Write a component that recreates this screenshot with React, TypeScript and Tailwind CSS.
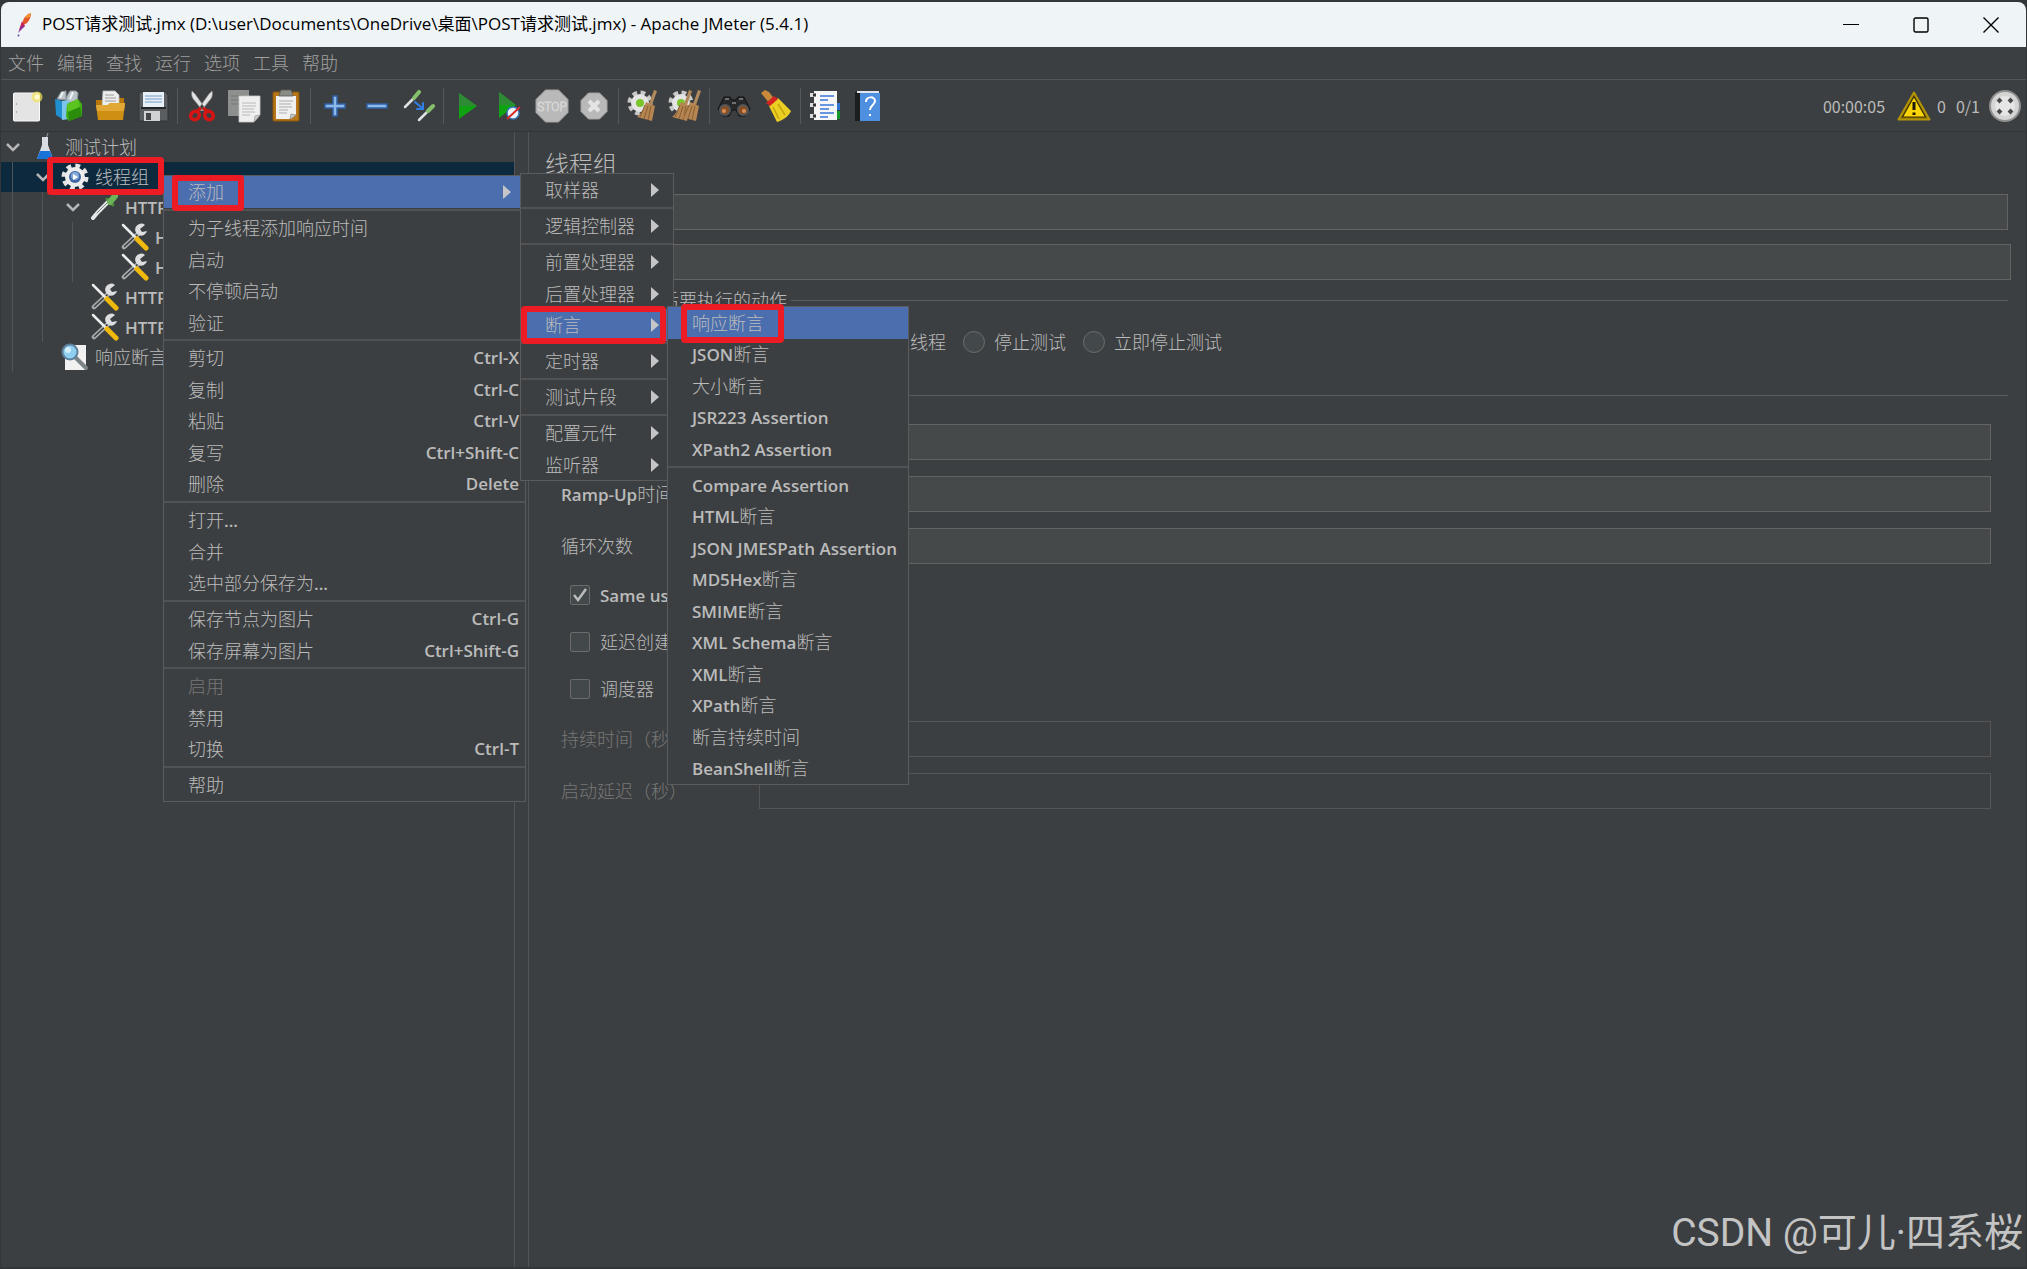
import { Fragment } from "react";
import type { ReactNode } from "react";
import clsx from "clsx";

interface Entry {
  label: string;
  shortcut?: string;
  submenu?: boolean;
  active?: boolean;
  disabled?: boolean;
}

interface TreeNode {
  level: number;
  label: string;
  icon: ReactNode;
  open?: boolean;
  selected?: boolean;
}

// ==================== Icons ====================
const NewIcon = () => (
  <svg width="32" height="32" viewBox="0 0 32 32">
    <rect x="2.5" y="3" width="26" height="28" rx="1" fill="#e4e4e4" stroke="#fafafa" />
    <circle cx="5.5" cy="14" r=".8" fill="#999" />
    <circle cx="5.5" cy="22" r=".8" fill="#999" />
    <circle cx="26" cy="7" r="5.5" fill="#f4e45c" opacity=".7" />
    <circle cx="26" cy="7" r="2.5" fill="#fffbd0" />
  </svg>
);

const TemplatesIcon = () => (
  <svg width="32" height="32" viewBox="0 0 32 32">
    <path d="M4 9 8 2l5-1v9zM13 8l4-7h6l2 2-1 8-10 2z" fill="#b9c3c8" stroke="#8b979d" />
    <path d="M7 8 10 2M17 9l3-7" stroke="#eef3f5" strokeWidth="2" />
    <path d="M2 9 9 11v18l-6-4z" fill="#1f8fd0" />
    <path d="M9 11 16 10v19l-7 1z" fill="#7cc4ea" />
    <path d="M14 14 25 9l4 5v12l-13 5-3-4z" fill="#3fae12" />
    <path d="M14 14 25 9l2 8-12 5z" fill="#5cc41f" />
    <path d="M15 22 27 17l2 9-13 5z" fill="#2a8c0a" />
  </svg>
);

const OpenIcon = () => (
  <svg width="32" height="32" viewBox="0 0 32 32">
    <path d="M1 10h7l2-2h19v8H1z" fill="#b87809" />
    <path d="M8 1h12l4 4v12H7z" fill="#ededed" stroke="#bdbdbd" strokeWidth=".8" />
    <path d="M10 5h9M10 8h11M10 11h11" stroke="#9b9b9b" strokeWidth="1.2" />
    <path d="M1 15h12l2-2h15l-2 17H3z" fill="#cf8f12" />
    <path d="M1 15h12l2-2h15l-1 8H2z" fill="#e2a836" />
  </svg>
);

const SaveIcon = () => (
  <svg width="32" height="32" viewBox="0 0 32 32">
    <path d="M3 2h26l2 3v26H2V4z" fill="#5a5e61" stroke="#303335" />
    <path d="M6 2h21v15H6z" fill="#e9f1f8" />
    <path d="M8 6h17M8 9h17M8 12h17" stroke="#9bb9d6" strokeWidth="1.5" />
    <path d="M7 21h16v10H7z" fill="#d0d2d3" />
    <path d="M9 23h5v7H9z" fill="#45484a" />
    <path d="M4 18h25" stroke="#232526" strokeWidth="2" />
  </svg>
);

const CutIcon = () => (
  <svg width="32" height="32" viewBox="0 0 32 32" fill="none">
    <path d="M6 1c-1 4 0 7 3 10l8 10 2-3L9 4zM26 1c1 4 0 7-3 10l-8 10-2-3L23 4z" fill="#e2e2e2" stroke="#9a9a9a" strokeWidth=".6" />
    <path d="m15 18-4 3M17 18l4 3" stroke="#d51414" strokeWidth="3" />
    <ellipse cx="9" cy="25.5" rx="4.5" ry="4" stroke="#d51414" strokeWidth="3.5" transform="rotate(-35 9 25.5)" />
    <ellipse cx="23" cy="25.5" rx="4.5" ry="4" stroke="#d51414" strokeWidth="3.5" transform="rotate(35 23 25.5)" />
  </svg>
);

const CopyIcon = () => (
  <svg width="34" height="34" viewBox="0 0 34 34">
    <path d="M1 1h21v26H1z" fill="#8e9090" />
    <path d="M4 7h14M4 11h14M4 15h10" stroke="#777" />
    <path d="M12 7h21v19l-6 7H12z" fill="#efefef" stroke="#c9c9c9" strokeWidth=".8" />
    <path d="M15 14h14M15 17h14M15 20h12M15 23h13M15 26h8" stroke="#b9b9b9" />
    <path d="m27 33 1-6 5-1z" fill="#cfcfcf" stroke="#8c8c8c" strokeWidth=".6" />
  </svg>
);

const PasteIcon = () => (
  <svg width="32" height="34" viewBox="0 0 32 34">
    <rect x="3" y="3" width="26" height="29" rx="1" fill="#b5761c" stroke="#8b5709" />
    <path d="M6 7h20v19l-5 4H6z" fill="#f0f0f0" />
    <path d="M11 1h10l2 6H9z" fill="#8a8c86" stroke="#5a5c58" strokeWidth=".8" />
    <path d="M9 12h14M9 15h12M9 18h13M9 21h9M9 24h8" stroke="#adadad" />
    <path d="m20 30 1-5 5 1z" fill="#c9c9c9" stroke="#777" strokeWidth=".6" />
  </svg>
);

const PlusIcon = () => (
  <svg width="22" height="22" viewBox="0 0 22 22">
    <path d="M9 1h4v8h8v4h-8v8H9v-8H1V9h8z" fill="#8db8ea" stroke="#2f62a8" strokeWidth="1.5" />
  </svg>
);

const MinusIcon = () => (
  <svg width="22" height="22" viewBox="0 0 22 22">
    <path d="M1 9h20v4H1z" fill="#8db8ea" stroke="#2f62a8" strokeWidth="1.5" />
  </svg>
);

const ToggleIcon = () => (
  <svg width="32" height="32" viewBox="0 0 32 32" strokeLinecap="round">
    <path d="m2 17 9-9" stroke="#dfe3e3" strokeWidth="2.5" />
    <path d="m11 8 5-6" stroke="#86c06c" strokeWidth="4" />
    <path d="m16 30 9-9" stroke="#dfe3e3" strokeWidth="2.5" />
    <path d="m25 21 5-5" stroke="#86c06c" strokeWidth="4" />
    <path d="m12 12 7 6M20 13v6h-6" stroke="#2f7fe6" strokeWidth="2" fill="none" />
  </svg>
);

const StartIcon = () => (
  <svg width="20" height="28" viewBox="0 0 20 28">
    <path d="M1 1 19 14 1 27z" fill="#0fa312" />
    <path d="M1 1 19 14H1z" fill="#2f8a36" />
  </svg>
);

const StartNoPauseIcon = () => (
  <svg width="24" height="30" viewBox="0 0 24 30">
    <path d="M1 1 18 14 1 27z" fill="#0fa312" />
    <path d="M1 1 18 14H1z" fill="#2f8a36" />
    <circle cx="15" cy="22" r="6" fill="#eef4fb" stroke="#3a78b8" strokeWidth="1.5" />
    <path d="M9 28 22 16" stroke="#d82a2a" strokeWidth="2" />
  </svg>
);

const StopIcon = () => (
  <svg width="34" height="34" viewBox="0 0 34 34">
    <path d="M10.5 1h13L33 10.5v13L23.5 33h-13L1 23.5v-13z" fill="#b9b9b9" stroke="#a2a2a2" />
    <text x="17" y="22" textAnchor="middle" fontSize="12" fontFamily="Roboto, sans-serif" fill="#b9b9b9" stroke="#d6d6d6" strokeWidth=".8">
      STOP
    </text>
  </svg>
);

const ShutdownIcon = () => (
  <svg width="28" height="28" viewBox="0 0 28 28">
    <path d="M8.5 1h11L27 8.5v11L19.5 27h-11L1 19.5v-11z" fill="#b9b9b9" stroke="#a2a2a2" />
    <path d="m9 9 10 10M19 9 9 19" stroke="#e4e4e4" strokeWidth="4" />
  </svg>
);

const Broom = ({ x }: { x: number }) => (
  <g transform={`translate(${x} 0)`}>
    <path d="m26 1 3 1-5 14-3-1z" fill="#b08a5c" />
    <path d="m18 13 9 4-3 15-15-4c4-3 7-9 9-15z" fill="#b58552" />
    <path d="m17 16-5 12M20 17l-4 13M23 17l-3 14" stroke="#8a5f33" />
  </g>
);

const Cog = () => (
  <g>
    <circle cx="13" cy="14" r="10" fill="none" stroke="#c9c9c9" strokeWidth="5" strokeDasharray="4.5 3.4" />
    <circle cx="13" cy="14" r="9" fill="#e4e4e4" />
    <circle cx="13" cy="14" r="4" fill="#7ac52b" />
  </g>
);

const ClearIcon = () => (
  <svg width="32" height="34" viewBox="0 0 32 34">
    <Cog />
    <Broom x={1} />
  </svg>
);

const ClearAllIcon = () => (
  <svg width="34" height="34" viewBox="0 0 34 34">
    <Cog />
    <Broom x={-5} />
    <Broom x={4} />
  </svg>
);

const SearchIcon = () => (
  <svg width="34" height="24" viewBox="0 0 34 24">
    <path d="M7 3h6l2 3h4l2-3h6l6 12-5 7h-6l-3-6h-4l-3 6H6l-5-7z" fill="#26282a" stroke="#111" />
    <path d="M8 5h4M22 5h4M15 9h4" stroke="#6c7073" strokeWidth="2" />
    <circle cx="8" cy="16" r="5" fill="#8b4d24" stroke="#54575a" strokeWidth="2" />
    <circle cx="26" cy="16" r="5" fill="#8b4d24" stroke="#54575a" strokeWidth="2" />
    <circle cx="7" cy="17" r="2" fill="#d98e55" />
    <circle cx="27" cy="17" r="2" fill="#d98e55" />
  </svg>
);

const ResetSearchIcon = () => (
  <svg width="32" height="34" viewBox="0 0 32 34">
    <path d="m1 4 4-3 4 2 6 8-5 4z" fill="#c98a3c" />
    <path d="M9 17 18 9l13 13c-2 5-8 9-14 11z" fill="#eccf23" />
    <path d="m13 18 6 12M18 15l7 11" stroke="#c3a30f" strokeWidth="1.5" />
    <path d="m6 14 8-7 4 3-8 7z" fill="#d22323" />
  </svg>
);

const FunctionHelperIcon = () => (
  <svg width="32" height="32" viewBox="0 0 32 32">
    <path d="M27 13h4v7h-4z" fill="#2f74d0" />
    <path d="M27 21h4v8h-4z" fill="#159a2a" />
    <path d="M5 1h23v29H5z" fill="#f6f6f6" />
    <path d="M1 5h6M1 15h6M1 26h6" stroke="#dcdcdc" strokeWidth="4" />
    <path d="M4 5h3M4 15h3M4 26h3" stroke="#333" strokeWidth="3" />
    <path d="M11 6h14M11 10h8M11 15h14M11 19h9M11 23h14M11 27h8" stroke="#3975d8" strokeWidth="1.5" />
  </svg>
);

const HelpIcon = () => (
  <svg width="26" height="32" viewBox="0 0 26 32">
    <path d="M1 2 5 1h20v30H1z" fill="#1b1d1f" />
    <path d="M6 3h20v28H6z" fill="#4f8fe0" />
    <path d="M3 1h22v2H3z" fill="#dfe6ee" />
    <path d="M12 12c0-6 9-6 9-1 0 4-5 4-5 9M16 24v2" stroke="#fff" strokeWidth="2" fill="none" />
  </svg>
);

const WarningIcon = () => (
  <svg width="34" height="30" viewBox="0 0 34 30">
    <path d="M17 1.5 32.5 28.5H1.5z" fill="#8d7403" stroke="#b39406" strokeWidth="2" strokeLinejoin="round" />
    <path d="M17 5.5 28.5 26h-23z" fill="#fcd506" stroke="#3a3003" strokeWidth="1.2" />
    <path d="M17 11v8M17 21.5v2.5" stroke="#1e1a05" strokeWidth="3" />
  </svg>
);

const StatusIcon = () => (
  <svg width="34" height="34" viewBox="0 0 34 34">
    <circle cx="17" cy="17" r="16" fill="#8f8f8f" />
    <circle cx="17" cy="17" r="14" fill="#d4d4d4" />
    <circle cx="17" cy="17" r="10" fill="#e6e6e6" />
    <path d="m10 13 3-3M21 10l3 3M24 21l-3 3M13 24l-3-3" stroke="#4a4a4a" strokeWidth="4" />
  </svg>
);

const FeatherIcon = () => (
  <svg width="16" height="24" viewBox="0 0 16 24">
    <path d="M14 0c-4 1-7 4-8 8l-1 5 5-3c3-3 4-7 4-10z" fill="#e4572b" />
    <path d="M14 0c-3 1-5 3-6 5l5-1z" fill="#f2992e" />
    <path d="M5 8c-1 3-2 6-3 9l6-4z" fill="#c3265a" />
    <path d="m4 13-3 7 4-4 3-3z" fill="#8d2f8f" />
    <circle cx="1.5" cy="22.5" r="1" fill="#5c4da0" />
  </svg>
);

const FlaskIcon = () => (
  <svg width="18" height="28" viewBox="0 0 18 28">
    <path d="m9 8 3-8" stroke="#9a9fa3" />
    <path d="M6 4h6v8l5 14H1l5-14z" fill="#d7dde2" />
    <path d="M4 18h10l3 8H1z" fill="#1973d6" />
  </svg>
);

const ThreadGroupIcon = () => (
  <svg width="28" height="28" viewBox="0 0 28 28">
    <circle cx="14" cy="14" r="11" fill="none" stroke="#e4e4e4" strokeWidth="5" strokeDasharray="4.6 4.04" />
    <circle cx="14" cy="14" r="10" fill="#ededed" />
    <circle cx="14" cy="14" r="6" fill="#3f67a6" />
    <circle cx="14" cy="13" r="4" fill="#86a9da" />
    <path d="m12 11 5 3-5 3z" fill="#fff" />
  </svg>
);

const SamplerIcon = () => (
  <svg width="28" height="28" viewBox="0 0 28 28" strokeLinecap="round">
    <path d="m2 25 5-6L17 9" stroke="#e4e8e8" strokeWidth="4" fill="none" />
    <path d="m6 20 10-10" stroke="#7b8081" />
    <path d="m16 6 6 6" stroke="#4c8a3e" strokeWidth="3" />
    <path d="m19 9 5-6" stroke="#6cb457" strokeWidth="6" />
  </svg>
);

const ConfigIcon = () => (
  <svg width="28" height="28" viewBox="0 0 28 28" strokeLinecap="round">
    <path d="M3 24 17 11" stroke="#a9acad" strokeWidth="4.5" />
    <path d="M3.5 23.5 17 11" stroke="#3c3f41" strokeWidth="1.5" />
    <path d="M24 2a6 6 0 1 0 2 6l-5 1-2-3z" fill="#dcdedf" />
    <path d="m2 2 13 13" stroke="#eceeee" strokeWidth="2.5" />
    <path d="m16 16 9 9" stroke="#f0b90d" strokeWidth="5" />
  </svg>
);

const ViewResultsIcon = () => (
  <svg width="28" height="28" viewBox="0 0 28 28">
    <path d="M4 2h21v25H4z" fill="#f1f1f1" />
    <path d="m14 14 11 11" stroke="#7d8488" strokeWidth="4" strokeLinecap="round" />
    <circle cx="9" cy="9" r="7.5" fill="#8fd0f0" stroke="#5b7f9c" strokeWidth="2" />
    <circle cx="7" cy="7" r="3" fill="#d2eefb" />
  </svg>
);

const Chevron = () => (
  <svg width="14" height="10" viewBox="0 0 14 10" fill="none" stroke="#b4b6b7" strokeWidth="2.5">
    <path d="m1 2 6 6 6-6" />
  </svg>
);

// ==================== Data ====================
const menus = ["文件", "编辑", "查找", "运行", "选项", "工具", "帮助"];

const toolbar = [
  [
    { name: "新建", icon: <NewIcon /> },
    { name: "模板", icon: <TemplatesIcon /> },
    { name: "打开", icon: <OpenIcon /> },
    { name: "保存", icon: <SaveIcon /> },
  ],
  [
    { name: "剪切", icon: <CutIcon /> },
    { name: "复制", icon: <CopyIcon /> },
    { name: "粘贴", icon: <PasteIcon /> },
  ],
  [
    { name: "展开", icon: <PlusIcon /> },
    { name: "折叠", icon: <MinusIcon /> },
    { name: "切换", icon: <ToggleIcon /> },
  ],
  [
    { name: "启动", icon: <StartIcon /> },
    { name: "不停顿启动", icon: <StartNoPauseIcon /> },
    { name: "停止", icon: <StopIcon /> },
    { name: "关闭", icon: <ShutdownIcon /> },
  ],
  [
    { name: "清除", icon: <ClearIcon /> },
    { name: "清除全部", icon: <ClearAllIcon /> },
  ],
  [
    { name: "查找", icon: <SearchIcon /> },
    { name: "重置查找", icon: <ResetSearchIcon /> },
  ],
  [
    { name: "函数助手", icon: <FunctionHelperIcon /> },
    { name: "帮助", icon: <HelpIcon /> },
  ],
];

const tree: TreeNode[] = [
  { level: 0, label: "测试计划", icon: <FlaskIcon />, open: true },
  { level: 1, label: "线程组", icon: <ThreadGroupIcon />, open: true, selected: true },
  { level: 2, label: "HTTP请求", icon: <SamplerIcon />, open: true },
  { level: 3, label: "HTTP信息头管理器", icon: <ConfigIcon /> },
  { level: 3, label: "HTTP Cookie管理器", icon: <ConfigIcon /> },
  { level: 2, label: "HTTP请求默认值", icon: <ConfigIcon /> },
  { level: 2, label: "HTTP信息头管理器", icon: <ConfigIcon /> },
  { level: 1, label: "响应断言结果", icon: <ViewResultsIcon /> },
];

const errorActions = ["继续", "启动下一进程循环", "停止线程", "停止测试", "立即停止测试"];

const contextMenu: Entry[][] = [
  [{ label: "添加", submenu: true, active: true }],
  [{ label: "为子线程添加响应时间" }, { label: "启动" }, { label: "不停顿启动" }, { label: "验证" }],
  [
    { label: "剪切", shortcut: "Ctrl-X" },
    { label: "复制", shortcut: "Ctrl-C" },
    { label: "粘贴", shortcut: "Ctrl-V" },
    { label: "复写", shortcut: "Ctrl+Shift-C" },
    { label: "删除", shortcut: "Delete" },
  ],
  [{ label: "打开..." }, { label: "合并" }, { label: "选中部分保存为..." }],
  [
    { label: "保存节点为图片", shortcut: "Ctrl-G" },
    { label: "保存屏幕为图片", shortcut: "Ctrl+Shift-G" },
  ],
  [{ label: "启用", disabled: true }, { label: "禁用" }, { label: "切换", shortcut: "Ctrl-T" }],
  [{ label: "帮助" }],
];

const addMenu: Entry[][] = [
  [{ label: "取样器", submenu: true }],
  [{ label: "逻辑控制器", submenu: true }],
  [
    { label: "前置处理器", submenu: true },
    { label: "后置处理器", submenu: true },
    { label: "断言", submenu: true, active: true },
  ],
  [{ label: "定时器", submenu: true }],
  [{ label: "测试片段", submenu: true }],
  [
    { label: "配置元件", submenu: true },
    { label: "监听器", submenu: true },
  ],
];

const assertionMenu: Entry[][] = [
  [
    { label: "响应断言", active: true },
    { label: "JSON断言" },
    { label: "大小断言" },
    { label: "JSR223 Assertion" },
    { label: "XPath2 Assertion" },
  ],
  [
    { label: "Compare Assertion" },
    { label: "HTML断言" },
    { label: "JSON JMESPath Assertion" },
    { label: "MD5Hex断言" },
    { label: "SMIME断言" },
    { label: "XML Schema断言" },
    { label: "XML断言" },
    { label: "XPath断言" },
    { label: "断言持续时间" },
    { label: "BeanShell断言" },
  ],
];

// Latin runs are drawn heavier than the Chinese ones
function Label({ text }: { text: string }) {
  return (
    <>
      {text.split(/([\x21-\x7e][\x20-\x7e]*)/).map((part, i) =>
        i % 2 ? (
          <span key={i} className="text-[17px] font-semibold">
            {part}
          </span>
        ) : (
          part
        )
      )}
    </>
  );
}

// ==================== Menus ====================
function Popup({ groups, className }: { groups: Entry[][]; className: string }) {
  return (
    <div role="menu" className={clsx("absolute border border-[#5a5b5c] bg-[#3c3f41]", className)}>
      {groups.map((group, g) => (
        <Fragment key={g}>
          {g > 0 && <div role="separator" className="my-px h-0.5 bg-[#505254]" />}
          <div>
            {group.map((item) => (
              <button
                key={item.label}
                role="menuitem"
                disabled={item.disabled}
                className={clsx(
                  "flex w-full items-center justify-between pl-6 pr-1.5 whitespace-nowrap odd:h-8 even:h-[31px]",
                  item.active && "bg-[#4b6eaf]",
                  item.disabled && "text-[#777]"
                )}
              >
                <span>
                  <Label text={item.label} />
                </span>
                {item.shortcut && <span className="text-[17px] font-semibold">{item.shortcut}</span>}
                {item.submenu && (
                  <svg width="8" height="14" viewBox="0 0 8 14" className="mr-2 fill-[#c4c5c6]">
                    <path d="M0 0 8 7 0 14z" />
                  </svg>
                )}
              </button>
            ))}
          </div>
        </Fragment>
      ))}
    </div>
  );
}

const Highlight = ({ className }: { className: string }) => (
  <div className={clsx("pointer-events-none absolute rounded-sm border-6 border-[#ed1c24]", className)} />
);

// ==================== Form parts ====================
function Field({ id, label, value, disabled }: { id: string; label: string; value?: string; disabled?: boolean }) {
  return (
    <div className="flex h-9 items-center">
      <label htmlFor={id} className={clsx("w-[198px] shrink-0", disabled && "text-[#777]")}>
        <Label text={label} />
      </label>
      <input
        id={id}
        defaultValue={value}
        disabled={disabled}
        className={clsx(
          "h-full min-w-0 flex-1 border px-2 outline-none",
          disabled ? "border-[#555] bg-[#3c3f41]" : "border-[#646464] bg-[#45494a]"
        )}
      />
    </div>
  );
}

function Check({ label, checked }: { label: string; checked?: boolean }) {
  return (
    <label className="flex h-6 items-center gap-2.5">
      <span className="grid size-5 shrink-0 place-items-center">
        <input
          type="checkbox"
          defaultChecked={checked}
          className="peer col-start-1 row-start-1 size-5 appearance-none rounded-xs border border-[#6b6b6b] bg-[#43494a]"
        />
        <svg
          viewBox="0 0 14 14"
          className="pointer-events-none col-start-1 row-start-1 hidden size-3.5 fill-none stroke-[#bbb] stroke-[2.5] peer-checked:block"
        >
          <path d="m1 7 4 5 8-11" />
        </svg>
      </span>
      <span>
        <Label text={label} />
      </span>
    </label>
  );
}

const Legend = ({ children }: { children: ReactNode }) => (
  <legend className="flex h-6 w-full items-center gap-1 pl-2 after:h-px after:flex-1 after:bg-[#5a5c5e]">
    {children}
  </legend>
);

export default function App() {
  return (
    <div className="relative flex min-h-screen flex-col overflow-hidden bg-[#333638] px-px py-0.5 font-['Open_Sans','Noto_Sans_CJK_SC',sans-serif] text-lg leading-6 font-light text-[#bbb]">
      {/* Title bar */}
      <header className="flex h-[45px] items-center rounded-t-lg bg-[#eff4f7] pl-4 font-normal text-black">
        <FeatherIcon />
        <h1 className="ml-[9px] flex-1 pb-0.5 text-[17px]">
          POST请求测试.jmx (D:\user\Documents\OneDrive\桌面\POST请求测试.jmx) - Apache JMeter (5.4.1)
        </h1>
        <button aria-label="最小化" className="grid h-full w-[70px] place-items-center">
          <svg width="16" height="16" viewBox="0 0 16 16" stroke="#000">
            <path d="M0 7.500h16" />
          </svg>
        </button>
        <button aria-label="最大化" className="grid h-full w-[70px] place-items-center">
          <svg width="16" height="16" viewBox="0 0 16 16" fill="none" stroke="#000" strokeWidth="1.4">
            <rect x="1" y="1" width="14" height="14" rx="1.5" />
          </svg>
        </button>
        <button aria-label="关闭" className="grid h-full w-[70px] place-items-center">
          <svg width="16" height="16" viewBox="0 0 16 16" stroke="#000" strokeWidth="1.4">
            <path d="m.5.5 15 15M15.5.5l-15 15" />
          </svg>
        </button>
      </header>

      {/* Menu bar */}
      <nav className="flex h-[33px] items-center gap-[13px] border-b border-[#555] bg-[#3c3f41] pl-[7px] text-[#a0a0a0]">
        {menus.map((item) => (
          <button key={item}>{item}</button>
        ))}
      </nav>

      {/* Toolbar */}
      <div className="flex h-[52px] items-center border-b border-[#323436] bg-[#3c3f41] pr-1 pl-[5px]">
        {toolbar.map((group, g) => (
          <Fragment key={g}>
            {g > 0 && <div className="mx-[3px] h-9 w-px bg-[#55575a]" />}
            {group.map((tool) => (
              <button key={tool.name} aria-label={tool.name} className="grid h-10 w-[42px] place-items-center">
                {tool.icon}
              </button>
            ))}
          </Fragment>
        ))}
        <div className="ml-auto flex items-center font-['Noto_Sans_CJK_SC',sans-serif] text-base font-normal">
          <span className="mr-3">00:00:05</span>
          <WarningIcon />
          <span className="mr-2.5 ml-1.5">0</span>
          <span className="mr-2">0/1</span>
          <StatusIcon />
        </div>
      </div>

      <div className="flex flex-1 bg-[#3c3f41]">
        {/* Test plan tree */}
        <ul role="tree" className="w-[514px] shrink-0 border-r border-[#515355]">
          {tree.map((node, i) => (
            <li
              key={i}
              role="treeitem"
              aria-selected={!!node.selected}
              className={clsx("flex h-[30px] items-center", node.selected && "bg-[#0d293e]")}
            >
              {Array.from({ length: node.level }, (_, n) => (
                <span key={n} className="h-full w-[30px] shrink-0 pl-[11px]">
                  <span className="block h-full w-px bg-[#515355]" />
                </span>
              ))}
              <span className="grid w-6 shrink-0 place-items-center">{node.open && <Chevron />}</span>
              <span className="mx-1 grid w-8 shrink-0 place-items-center">{node.icon}</span>
              <span className="whitespace-nowrap">
                <Label text={node.label} />
              </span>
            </li>
          ))}
        </ul>
        <div className="w-3.5 shrink-0 border-r border-[#515355]" />

        {/* Thread group settings */}
        <main className="min-w-0 flex-1 pt-4 pr-[18px] pl-4">
          <h2 className="text-2xl leading-8">线程组</h2>
          <div className="mt-3.5 flex h-9 items-center">
            <label htmlFor="name" className="w-16 shrink-0">名称：</label>
            <input id="name" className="h-full min-w-0 flex-1 border border-[#646464] bg-[#45494a] px-2 outline-none" />
          </div>
          <div className="mt-3.5 -mr-[3px] flex h-9 items-center">
            <label htmlFor="comment" className="w-16 shrink-0">注释：</label>
            <input id="comment" className="h-full min-w-0 flex-1 border border-[#646464] bg-[#45494a] px-2 outline-none" />
          </div>

          <fieldset className="mt-2">
            <Legend>在取样器错误后要执行的动作</Legend>
            <div className="mt-[18px] flex gap-[17px] pl-[22px]">
              {errorActions.map((action) => (
                <label key={action} className="flex h-6 items-center gap-[9px] whitespace-nowrap">
                  <input
                    type="radio"
                    name="on-error"
                    className="size-[22px] appearance-none rounded-full border border-[#6b6b6b] bg-[#43494a]"
                  />
                  {action}
                </label>
              ))}
            </div>
          </fieldset>

          <fieldset className="mt-[29px]">
            <Legend>线程属性</Legend>
            <div className="mt-[17px] flex flex-col gap-4 pr-[17px] pl-4">
              <Field id="threads" label="线程数" />
              <Field id="ramp-up" label="Ramp-Up时间（秒）" />
              <Field id="loops" label="循环次数" />
            </div>
            <div className="mt-[19px] flex flex-col gap-[23px] pl-[25px]">
              <Check label="Same user on each iteration" checked />
              <Check label="延迟创建线程直到需要" />
              <Check label="调度器" />
            </div>
            <div className="mt-5 flex flex-col gap-4 pr-[17px] pl-4">
              <Field id="duration" label="持续时间（秒）" disabled />
              <Field id="delay" label="启动延迟（秒）" disabled />
            </div>
          </fieldset>
        </main>
      </div>

      {/* Cascading menus */}
      <Popup groups={contextMenu} className="top-[175px] left-[163px] w-[363px]" />
      <Popup groups={addMenu} className="top-[173px] left-[520px] w-[154px]" />
      <Popup groups={assertionMenu} className="top-[306px] left-[667px] w-[242px]" />

      {/* Step highlights */}
      <Highlight className="top-[157px] left-[47px] h-[38px] w-[117px]" />
      <Highlight className="top-[175px] left-[172px] h-[36px] w-[72px]" />
      <Highlight className="top-[306px] left-[521px] h-[38px] w-[145px]" />
      <Highlight className="top-[304px] left-[681px] h-[39px] w-[103px]" />

      <p className="pointer-events-none absolute right-1 bottom-3 font-['Roboto','Noto_Sans_CJK_SC',sans-serif] text-[39px] leading-12 font-normal text-[#c4c4c4]">
        CSDN @可儿·四系桜
      </p>
    </div>
  );
}
